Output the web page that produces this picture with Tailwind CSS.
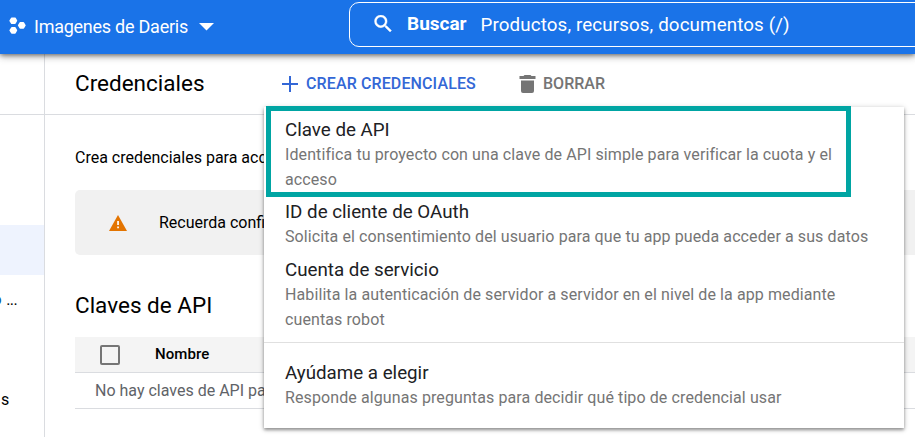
<!DOCTYPE html>
<html lang="es">
<head>
<meta charset="utf-8">
<title>Credenciales</title>
<script src="https://cdn.jsdelivr.net/npm/@tailwindcss/browser@4"></script>
</head>
<body class="relative flex h-[437px] w-[915px] flex-col overflow-hidden bg-white font-[Roboto,sans-serif] text-black">
<header class="relative z-10 flex h-[54px] shrink-0 items-start bg-[#1a73e8] text-white shadow-[0_1px_5px_rgba(0,0,0,0.55),0_3px_8px_rgba(0,0,0,0.2)]">
  <div class="flex h-[52px] w-[349px] shrink-0 items-center pl-[8px]">
    <svg class="h-[20px] w-[18px] shrink-0" viewBox="0 0 18 20" fill="currentColor" stroke="currentColor" stroke-width="1.600" stroke-linejoin="round"><path d="M3.800 2.200h3.200l1.400 2.500L7 7.200H3.800L2.200 4.700zM3.800 11.900h3.200l1.400 2.500L7 16.900H3.800l-1.600-2.500zM12.200 6.900h3.200l1.500 2.500-1.500 2.500h-3.200l-1.500-2.500z"/></svg>
    <span class="ml-[8px] w-[154px] whitespace-nowrap text-[18px] tracking-[-0.25px]">Imagenes de Daeris</span>
    <svg class="ml-[11px] mt-[2px] h-[8px] w-[15px]" viewBox="0 0 15 8" fill="currentColor"><path d="M0 0h15L7.500 7.600z"/></svg>
  </div>
  <div class="mt-[2px] flex h-[45px] w-[600px] shrink-0 items-center rounded-[10px] border border-white pl-[24px]">
    <svg class="mb-[2px] h-[17px] w-[18px] shrink-0" viewBox="3 3 17.500 17.500" fill="currentColor" stroke="currentColor" stroke-width=".4"><path d="M15.500 14h-.79l-.28-.27A6.471 6.471 0 0 0 16 9.500 6.500 6.500 0 1 0 9.500 16c1.610 0 3.090-.59 4.230-1.570l.27.28v.79l5 4.990L20.490 19l-4.990-5zm-6 0C7.010 14 5 11.990 5 9.500S7.010 5 9.500 5 14 7.010 14 9.500 11.990 14 9.500 14z"/></svg>
    <span class="ml-[15px] text-[19px] font-bold">Buscar</span>
    <span class="ml-[14px] mt-[2px] whitespace-nowrap text-[18.750px] tracking-[0.12px]">Productos, recursos, documentos (/)</span>
  </div>
</header>
<div class="flex flex-1">
  <aside class="w-[45px] shrink-0 border-r border-[#dadce0] text-[16px]">
    <div class="h-[61px] border-b border-[#dadce0]"></div>
    <div class="mt-[110px] h-[50px] bg-[#eef3fe]"></div>
    <div class="flex h-[50px] items-center justify-end pr-[27px]"><span class="flex gap-[5px] whitespace-nowrap tracking-[-0.6px]"><span class="text-[#0b57a0]">o</span><span>...</span></span></div>
    <div class="mt-[50px] flex h-[50px] items-center pl-px">s</div>
  </aside>
  <main class="flex-1">
    <div class="flex h-[61px] items-center border-b border-[#dadce0] pl-[30px]">
      <h1 class="w-[207px] text-[22.500px]">Credenciales</h1>
      <div class="flex items-center text-[16px] font-medium text-[#3367d6]">
        <svg class="h-[16px] w-[16px]" viewBox="0 0 16 16" fill="currentColor"><path d="M7 0h2v7h7v2H9v7H7V9H0V7h7z"/></svg>
        <span class="ml-[8px] w-[213px] whitespace-nowrap tracking-[0.12px]">CREAR CREDENCIALES</span>
      </div>
      <div class="flex items-center text-[16px] font-medium text-[#757575]">
        <svg class="h-[18px] w-[17px]" viewBox="0 0 17 18" fill="currentColor"><path d="M5.500 0h6l1 1H16.500v3H.5V1h4zM2 5.500h13V16a2 2 0 0 1-2 2H4a2 2 0 0 1-2-2z"/></svg>
        <span class="ml-[7px]">BORRAR</span>
      </div>
    </div>
    <div class="pl-[30px]">
      <p class="mt-[30px] h-[25px] whitespace-nowrap text-[16px] leading-[25px]">Crea credenciales para acc</p>
      <div class="mt-[20px] flex h-[65px] items-center rounded-l-[5px] bg-[#f1f1f1] pl-[34px]">
        <svg class="h-[16px] w-[18px]" viewBox="0 0 18 16"><path d="M9 0l9 16H0z" fill="#e37400"/><path d="M8.200 6h1.700v4H8.200zM8.200 11.500h1.700v1.800H8.200z" fill="#fff"/></svg>
        <span class="ml-[32px] whitespace-nowrap text-[16px]">Recuerda confi</span>
      </div>
      <h2 class="mt-[33px] h-[34px] text-[22.500px] leading-[34px]">Claves de API</h2>
      <div class="mt-[15px] flex h-[36px] items-center border-b border-[#dadce0] bg-[#f4f4f4] pl-[25px]">
        <div class="h-[20px] w-[20px] rounded-[2px] border-2 border-[#757575]"></div>
        <span class="ml-[35px] text-[15px] font-medium tracking-[0.1px]">Nombre</span>
      </div>
      <div class="flex h-[36px] items-center border-b border-[#dadce0] pl-[20px] text-[16px] text-[#5f6368]"><span class="whitespace-nowrap">No hay claves de API pa</span></div>
    </div>
  </main>
</div>
<div class="absolute left-[264px] top-[107px] h-[321px] w-[640px] bg-white pt-[6px] text-[16px] leading-[25px] tracking-[0.1px] text-[#757575] shadow-[0_2px_3px_rgba(0,0,0,0.35),0_1px_6px_rgba(0,0,0,0.2)]">
  <div class="px-[21px] pb-[3px] pt-[4px]"><div class="h-[25px] text-[18.750px] leading-[27px] tracking-normal text-[#202124]">Clave de API</div><div class="whitespace-nowrap">Identifica tu proyecto con una clave de API simple para verificar la cuota y el<br>acceso</div></div>
  <div class="px-[21px] py-[4px]"><div class="h-[25px] text-[18.750px] leading-[27px] tracking-normal text-[#202124]">ID de cliente de OAuth</div><div class="whitespace-nowrap">Solicita el consentimiento del usuario para que tu app pueda acceder a sus datos</div></div>
  <div class="px-[21px] py-[4px]"><div class="h-[25px] text-[18.750px] leading-[27px] tracking-normal text-[#202124]">Cuenta de servicio</div><div class="whitespace-nowrap">Habilita la autenticación de servidor a servidor en el nivel de la app mediante<br>cuentas robot</div></div>
  <div class="mt-[6px] border-t border-[#e0e0e0]"></div>
  <div class="mt-[13px] px-[21px] py-[4px]"><div class="h-[25px] text-[18.750px] leading-[27px] tracking-normal text-[#202124]">Ayúdame a elegir</div><div class="whitespace-nowrap">Responde algunas preguntas para decidir qué tipo de credencial usar</div></div>
</div>
<div class="absolute left-[266px] top-[106px] h-[91px] w-[585px] border-[5px] border-[#00a5a3]"></div>
</body>
</html>
